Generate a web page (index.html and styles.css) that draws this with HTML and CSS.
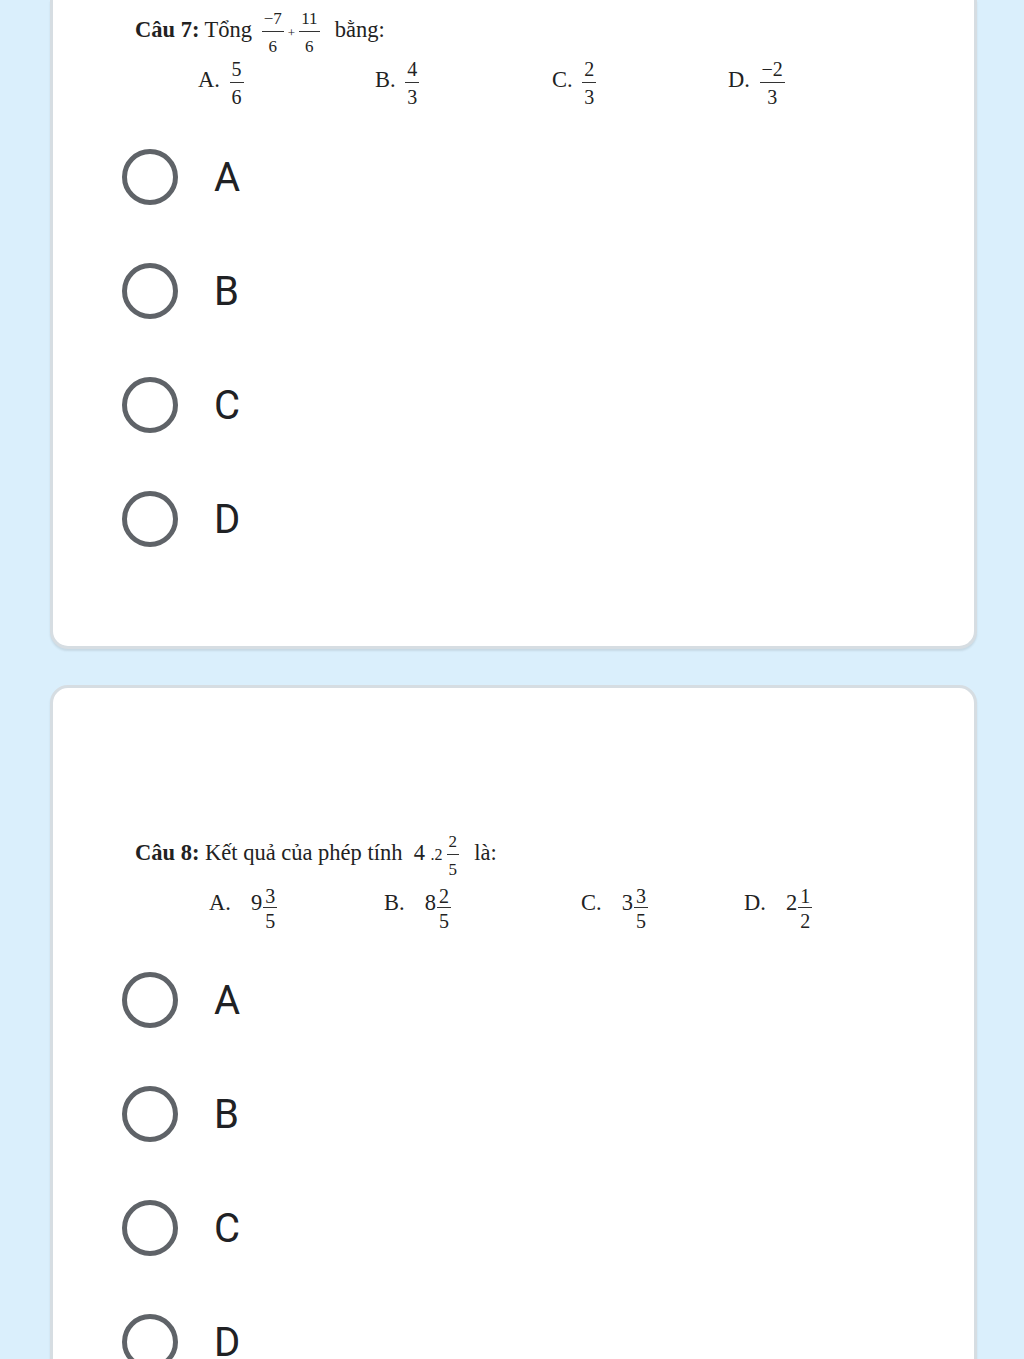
FILE: index.html
```html
<!DOCTYPE html>
<html lang="vi">
<head>
  <meta charset="UTF-8" />
  <meta name="viewport" content="width=device-width, initial-scale=1.0"/>
  <title>Bài kiểm tra</title>
  <link rel="stylesheet" href="styles.css">
</head>
<body>
  <div class="wrap">

    <!-- Câu 7 -->
    <div class="card card-top">
      <div class="question q7">
        <div class="q-title">
          <b>Câu 7:</b> Tổng
          <span class="frac small"><span class="num">−7</span><span class="den">6</span></span><span class="plus">+</span><span class="frac small"><span class="num">11</span><span class="den">6</span></span>
          &nbsp;bằng:
        </div>
        <div class="q-opts opts7">
          <span class="opt">A. <span class="frac"><span class="num">5</span><span class="den">6</span></span></span>
          <span class="opt">B. <span class="frac"><span class="num">4</span><span class="den">3</span></span></span>
          <span class="opt">C. <span class="frac"><span class="num">2</span><span class="den">3</span></span></span>
          <span class="opt">D. <span class="frac"><span class="num">−2</span><span class="den">3</span></span></span>
        </div>
      </div>
      <div class="choices">
        <label class="choice"><span class="radio"></span><span class="letter">A</span></label>
        <label class="choice"><span class="radio"></span><span class="letter">B</span></label>
        <label class="choice"><span class="radio"></span><span class="letter">C</span></label>
        <label class="choice"><span class="radio"></span><span class="letter">D</span></label>
      </div>
    </div>

    <!-- Câu 8 -->
    <div class="card card-next">
      <div class="question q8">
        <div class="q-title">
          <b>Câu 8:</b> Kết quả của phép tính&nbsp; 4 <span class="tiny">.2</span><span class="frac small"><span class="num">2</span><span class="den">5</span></span>
          &nbsp;là:
        </div>
        <div class="q-opts opts8">
          <span class="opt">A.<span class="whole">9</span><span class="frac mixed"><span class="num">3</span><span class="den">5</span></span></span>
          <span class="opt">B.<span class="whole">8</span><span class="frac mixed"><span class="num">2</span><span class="den">5</span></span></span>
          <span class="opt">C.<span class="whole">3</span><span class="frac mixed"><span class="num">3</span><span class="den">5</span></span></span>
          <span class="opt">D.<span class="whole">2</span><span class="frac mixed"><span class="num">1</span><span class="den">2</span></span></span>
        </div>
      </div>
      <div class="choices">
        <label class="choice"><span class="radio"></span><span class="letter">A</span></label>
        <label class="choice"><span class="radio"></span><span class="letter">B</span></label>
        <label class="choice"><span class="radio"></span><span class="letter">C</span></label>
        <label class="choice"><span class="radio"></span><span class="letter">D</span></label>
      </div>
    </div>

  </div>
</body>
</html>
```

FILE: styles.css
```css
body {
  margin: 0;
  background-color: #daeffc;
  font-family: Roboto, "Liberation Sans", sans-serif;
  color: #202124;
}

.wrap {
  padding: 0 47px 0 50px;
}

.card {
  background-color: #fff;
  border: 3px solid #d6dde2;
  border-radius: 18px;
  box-shadow: 0 2px 2px rgba(60, 64, 67, 0.12);
}

.card-top {
  border-top: none;
  border-radius: 0 0 18px 18px;
  padding-bottom: 70px;
}

.card-next {
  margin-top: 36px;
  padding-top: 135px;
  height: 900px;
}

/* question text (looks like a pasted Word snippet) */
.question {
  height: 120px;
  padding-left: 82px;
  font-family: "Liberation Serif", "Times New Roman", serif;
  font-size: 22.5px;
  color: #222;
  box-sizing: border-box;
}

.q-title {
  height: 59px;
  line-height: 59px;
  white-space: nowrap;
}

.q-opts {
  display: grid;
  height: 41px;
  line-height: 41px;
  white-space: nowrap;
}

.opts7 {
  padding-left: 63px;
  grid-template-columns: 177px 177px 176px auto;
}

.opts8 {
  padding-left: 74px;
  grid-template-columns: 175px 197px 163px auto;
}

.frac {
  display: inline-flex;
  flex-direction: column;
  align-items: center;
  vertical-align: 11px;
  font-size: 20px;
  line-height: 20px;
  margin: 0 4px;
}

.frac .num {
  border-bottom: 1px solid #333;
  padding: 0 2px 3px;
}

.frac .den {
  padding-top: 4px;
}

.frac.small {
  font-size: 17px;
  line-height: 17px;
  vertical-align: 13px;
}

.frac.small .num {
  padding-bottom: 4px;
}

.frac.small .den {
  padding-top: 6px;
}

.whole {
  margin-left: 20px;
}

.frac.mixed {
  font-size: 20px;
  line-height: 20px;
  vertical-align: 7px;
  margin-left: 1px;
}

.frac.mixed .num {
  padding-bottom: 1px;
}

.frac.mixed .den {
  padding-top: 3px;
}

.plus {
  font-size: 13px;
}

.tiny {
  font-size: 16px;
}

/* radio choices */
.choice {
  display: flex;
  align-items: center;
  height: 114px;
  padding-left: 69px;
}

.radio {
  width: 46px;
  height: 46px;
  border: 5px solid #5f6368;
  border-radius: 50%;
  flex-shrink: 0;
}

.letter {
  margin-left: 36px;
  font-size: 40px;
  color: #202124;
}
```
